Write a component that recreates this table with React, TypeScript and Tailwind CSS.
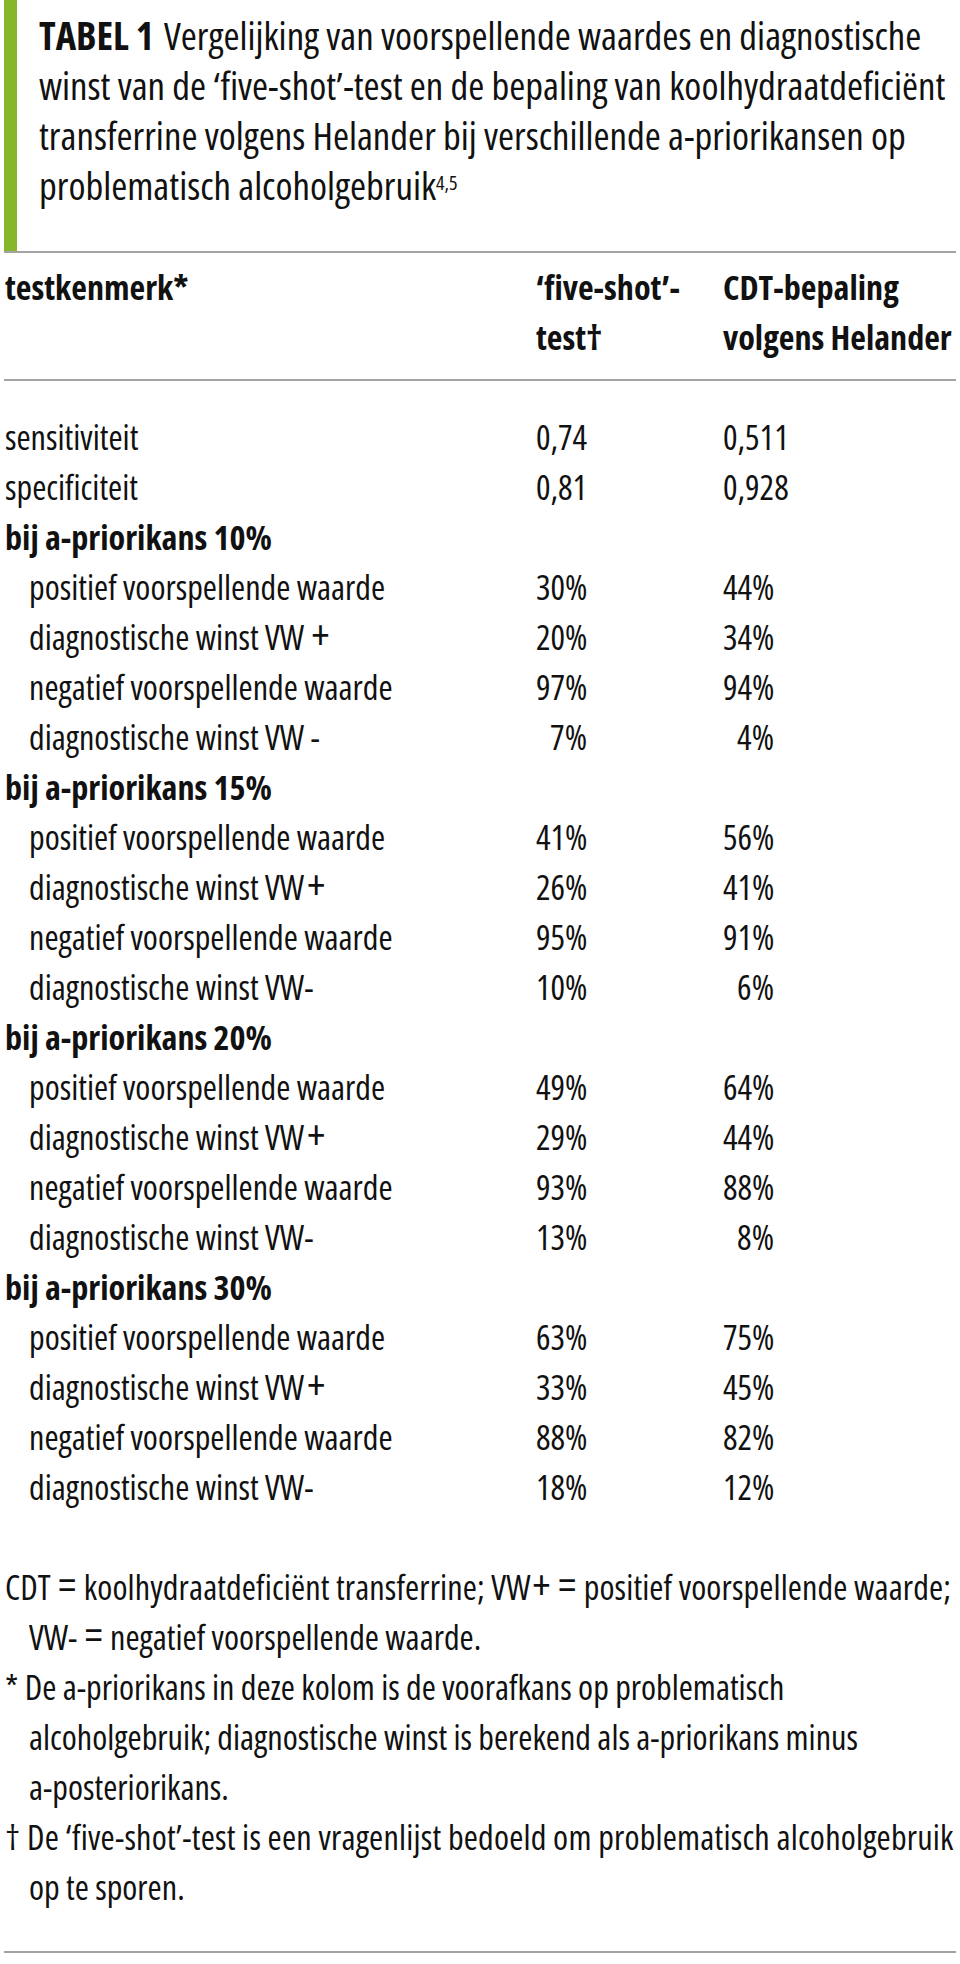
import React from "react";

type Row =
  | { kind: "plain"; label: React.ReactNode; a: string; b: string; dec?: boolean }
  | { kind: "group"; label: string }
  | { kind: "sub"; label: React.ReactNode; a: string; b: string };

const Plus = ({ cls }: { cls: string }) => <span className={cls}>+</span>;

const PlusSp = () => (
  <>
    VW <Plus cls="ml-[1px] text-[42px] leading-none" />
  </>
);
const PlusTight = () => (
  <>
    VW<Plus cls="ml-[3px] text-[42px] leading-none" />
  </>
);

const rows: Row[] = [
  { kind: "plain", label: "sensitiviteit", a: "0,74", b: "0,511", dec: true },
  { kind: "plain", label: "specificiteit", a: "0,81", b: "0,928", dec: true },
  { kind: "group", label: "bij a-priorikans 10%" },
  { kind: "sub", label: "positief voorspellende waarde", a: "30%", b: "44%" },
  { kind: "sub", label: <>diagnostische winst <PlusSp /></>, a: "20%", b: "34%" },
  { kind: "sub", label: "negatief voorspellende waarde", a: "97%", b: "94%" },
  { kind: "sub", label: "diagnostische winst VW -", a: "7%", b: "4%" },
  { kind: "group", label: "bij a-priorikans 15%" },
  { kind: "sub", label: "positief voorspellende waarde", a: "41%", b: "56%" },
  { kind: "sub", label: <>diagnostische winst <PlusTight /></>, a: "26%", b: "41%" },
  { kind: "sub", label: "negatief voorspellende waarde", a: "95%", b: "91%" },
  { kind: "sub", label: "diagnostische winst VW-", a: "10%", b: "6%" },
  { kind: "group", label: "bij a-priorikans 20%" },
  { kind: "sub", label: "positief voorspellende waarde", a: "49%", b: "64%" },
  { kind: "sub", label: <>diagnostische winst <PlusTight /></>, a: "29%", b: "44%" },
  { kind: "sub", label: "negatief voorspellende waarde", a: "93%", b: "88%" },
  { kind: "sub", label: "diagnostische winst VW-", a: "13%", b: "8%" },
  { kind: "group", label: "bij a-priorikans 30%" },
  { kind: "sub", label: "positief voorspellende waarde", a: "63%", b: "75%" },
  { kind: "sub", label: <>diagnostische winst <PlusTight /></>, a: "33%", b: "45%" },
  { kind: "sub", label: "negatief voorspellende waarde", a: "88%", b: "82%" },
  { kind: "sub", label: "diagnostische winst VW-", a: "18%", b: "12%" },
];

function Value({ v, dec }: { v: string; dec?: boolean }) {
  return (
    <span className={dec ? "inline-block w-[51px] whitespace-nowrap text-left" : "inline-block w-[51px] whitespace-nowrap text-right"}>
      {v}
    </span>
  );
}

const Eq = () => <span className="mx-[1px] text-[42px] leading-none">=</span>;

export default function App() {
  return (
    <div className="min-h-[1964px] w-[960px] bg-white px-[4px] font-['Open_Sans',sans-serif] text-[34.2px] leading-[50px] text-[#111] [font-stretch:75%]">
      {/* caption */}
      <div className="border-l-[13px] border-[#86b62c] pb-[41px] pl-[22px] pt-[10px] text-[38.8px] whitespace-nowrap">
        <div>
          <span className="mr-[10px] font-bold">TABEL 1</span>Vergelijking van voorspellende waardes en diagnostische
        </div>
        <div>winst van de ‘five-shot’-test en de bepaling van koolhydraatdeficiënt</div>
        <div>transferrine volgens Helander bij verschillende a-priorikansen op</div>
        <div>
          problematisch alcoholgebruik<sup className="text-[20px]">4,5</sup>
        </div>
      </div>

      {/* header */}
      <div className="grid grid-cols-[531px_187px_1fr] border-t-2 border-[#a3a3a3] pb-[17px] pl-[1px] pt-[9px] font-bold whitespace-nowrap">
        <div>testkenmerk*</div>
        <div>
          <div>‘five-shot’-</div>
          <div>test†</div>
        </div>
        <div>
          <div>CDT-bepaling</div>
          <div>volgens Helander</div>
        </div>
      </div>

      {/* body */}
      <div className="border-t-2 border-[#a3a3a3] pl-[1px] pt-[31px] whitespace-nowrap">
        {rows.map((r, i) =>
          r.kind === "group" ? (
            <div key={i} className="h-[50px] font-bold">
              {r.label}
            </div>
          ) : (
            <div key={i} className="grid h-[50px] grid-cols-[531px_187px_1fr]">
              <div className={r.kind === "sub" ? "pl-[24px]" : ""}>{r.label}</div>
              <div>
                <Value v={r.a} dec={r.kind === "plain" && r.dec} />
              </div>
              <div>
                <Value v={r.b} dec={r.kind === "plain" && r.dec} />
              </div>
            </div>
          )
        )}
      </div>

      {/* footnotes */}
      <div className="pb-[39px] pl-[1px] pt-[50px] whitespace-nowrap">
        <div className="h-[50px] tracking-[0.12px]">
          CDT <Eq /> koolhydraatdeficiënt transferrine; VW<Plus cls="ml-[2px] text-[42px] leading-none" /> <Eq /> positief voorspellende waarde;
        </div>
        <div className="h-[50px] pl-[24px]">
          VW- <Eq /> negatief voorspellende waarde.
        </div>
        <div>* De a-priorikans in deze kolom is de voorafkans op problematisch</div>
        <div className="pl-[24px]">alcoholgebruik; diagnostische winst is berekend als a-priorikans minus</div>
        <div className="pl-[24px]">a-posteriorikans.</div>
        <div className="tracking-[0.2px]">† De ‘five-shot’-test is een vragenlijst bedoeld om problematisch alcoholgebruik</div>
        <div className="pl-[24px]">op te sporen.</div>
      </div>
      <div className="border-t-2 border-[#a3a3a3]" />
    </div>
  );
}
